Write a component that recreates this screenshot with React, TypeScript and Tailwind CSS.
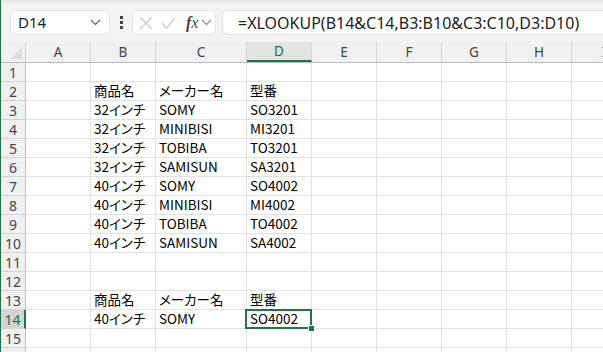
import React from 'react';

const cols = [
  { id: 'A', w: 'w-[65px]' },
  { id: 'B', w: 'w-[65px]' },
  { id: 'C', w: 'w-[91px]' },
  { id: 'D', w: 'w-[65px]' },
  { id: 'E', w: 'w-[65px]' },
  { id: 'F', w: 'w-[65px]' },
  { id: 'G', w: 'w-[65px]' },
  { id: 'H', w: 'w-[65px]' },
  { id: 'I', w: 'w-[65px]' },
];

const data: Record<number, string[]> = {
  2: ['商品名', 'メーカー名', '型番'],
  3: ['32インチ', 'SOMY', 'SO3201'],
  4: ['32インチ', 'MINIBISI', 'MI3201'],
  5: ['32インチ', 'TOBIBA', 'TO3201'],
  6: ['32インチ', 'SAMISUN', 'SA3201'],
  7: ['40インチ', 'SOMY', 'SO4002'],
  8: ['40インチ', 'MINIBISI', 'MI4002'],
  9: ['40インチ', 'TOBIBA', 'TO4002'],
  10: ['40インチ', 'SAMISUN', 'SA4002'],
  13: ['商品名', 'メーカー名', '型番'],
  14: ['40インチ', 'SOMY', 'SO4002'],
};

const rows = Array.from({ length: 16 }, (_, i) => i + 1);

function Chevron({ className }: { className?: string }) {
  return (
    <svg width="11" height="7" viewBox="0 0 11 7" className={className}>
      <path d="M1 1 L5.5 5.5 L10 1" fill="none" stroke="currentColor" strokeWidth="1.2" />
    </svg>
  );
}

export default function App() {
  return (
    <div className="w-[603px] h-[352px] overflow-hidden bg-white border-l border-[#1e7145] text-[#222] font-['Noto_Sans','Noto_Sans_CJK_JP',sans-serif]">
      {/* formula bar */}
      <div className="h-[42px] bg-[#f3f3f3] border-t-[3px] border-[#e6e6e6] flex items-center pl-[9px]">
        <div className="w-[100px] h-[25px] bg-white rounded-md border border-[#e3e3e3] flex items-center justify-between pl-[7px] pr-[8px]">
          <span className="text-[15px] leading-none">D14</span>
          <Chevron className="text-[#6b5a7a]" />
        </div>
        <div className="w-[22px] flex justify-center">
          <svg width="3" height="13" viewBox="0 0 3 13">
            <rect x="0" y="0" width="3" height="3" fill="#444" />
            <rect x="0" y="5" width="3" height="3" fill="#444" />
            <rect x="0" y="10" width="3" height="3" fill="#444" />
          </svg>
        </div>
        <div className="w-[84px] h-[25px] bg-white rounded-md border border-[#e3e3e3] flex items-center pl-[6px] gap-[8px]">
          <svg width="14" height="14" viewBox="0 0 14 14">
            <path d="M1 1 L13 13 M13 1 L1 13" stroke="#c8c8c8" strokeWidth="1.2" />
          </svg>
          <svg width="15" height="12" viewBox="0 0 15 12">
            <path d="M1 6 L5.5 11 L14 1" fill="none" stroke="#c8c8c8" strokeWidth="1.2" />
          </svg>
          <span className="text-[16px] italic leading-none text-[#444] ml-[2px] font-['Liberation_Serif',serif]">
            <b>f</b>x
          </span>
          <Chevron className="text-[#888] -ml-[5px]" />
        </div>
        <div className="ml-[6px] flex-1 h-[25px] bg-white rounded-l-md border border-r-0 border-[#e3e3e3] flex items-center pl-[15px] whitespace-nowrap overflow-hidden">
          <span className="text-[16px] leading-none">=XLOOKUP(B14&amp;C14,B3:B10&amp;C3:C10,D3:D10)</span>
        </div>
      </div>

      {/* column headers */}
      <div className="flex h-[21px] bg-[#f0f0f0] border-b border-[#bdbdbd]">
        <div className="w-[25px] shrink-0 border-r border-[#d4d4d4] relative">
          <svg width="12" height="12" viewBox="0 0 12 12" className="absolute right-[3px] bottom-[3px]">
            <path d="M12 0 L12 12 L0 12 Z" fill="#dcdcdc" />
          </svg>
        </div>
        {cols.map((c) => (
          <div
            key={c.id}
            className={`${c.w} shrink-0 flex items-center justify-center text-[13.5px] border-r border-[#d4d4d4] ${
              c.id === 'D' ? 'bg-[#e3e3e3] text-[#217346] border-b-2 border-b-[#217346]' : 'text-[#444]'
            }`}
          >
            {c.id}
          </div>
        ))}
      </div>

      {/* rows */}
      {rows.map((r) => {
        const vals = data[r];
        const active = r === 14;
        return (
          <div key={r} className="flex h-[19px]">
            <div
              className={`w-[25px] shrink-0 flex items-center justify-center text-[14px] border-b border-[#d4d4d4] ${
                active
                  ? 'bg-[#d3d3d3] text-[#217346] border-r-2 border-r-[#217346]'
                  : 'bg-[#f0f0f0] text-[#444] border-r border-r-[#bdbdbd]'
              }`}
            >
              {r}
            </div>
            {cols.map((c, ci) => {
              const text = vals && ci >= 1 && ci <= 3 ? vals[ci - 1] : '';
              const sel = active && c.id === 'D';
              return (
                <div
                  key={c.id}
                  className={`${c.w} shrink-0 relative border-r border-b border-[#e1e1e1] flex items-end pl-[3px] pb-[1px] text-[13.5px] leading-[17px] whitespace-nowrap text-black font-['Noto_Sans_CJK_JP','Noto_Sans',sans-serif] [font-feature-settings:'palt']`}
                >
                  {text}
                  {sel && (
                    <div className="absolute z-10 -left-[2px] -top-[1px] w-[67px] h-[20px] border-2 border-[#217346]">
                      <div className="absolute -right-[5px] -bottom-[5px] w-[7px] h-[7px] bg-[#217346] border border-white" />
                    </div>
                  )}
                </div>
              );
            })}
          </div>
        );
      })}
    </div>
  );
}
